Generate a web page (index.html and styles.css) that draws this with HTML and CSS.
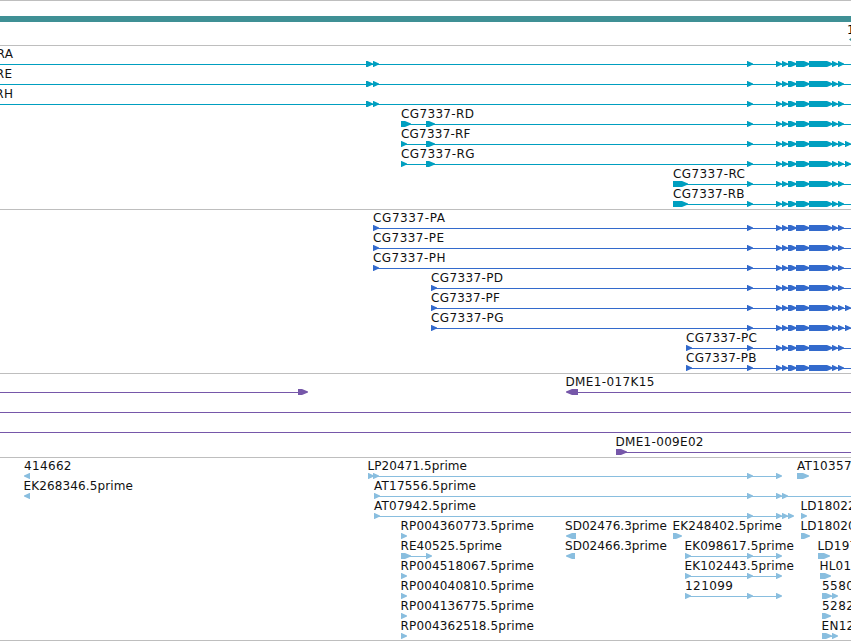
FILE: index.html
```html
<!DOCTYPE html>
<html lang="en">
<head>
<meta charset="utf-8">
<title>Genome browser</title>
<link rel="stylesheet" href="styles.css">
</head>
<body>
<main class="browser">
  <header class="ruler">
    <div class="ruler-bar"></div>
    <svg class="ruler-scale" width="851" height="23">
      <text class="scale-label" x="847" y="12">1</text>
      <path class="scale-arrow" d="M849 17.5L851 16V19Z"/>
    </svg>
  </header>
  <section class="track transcript" id="transcript"></section>
  <section class="track protein" id="protein"></section>
  <section class="track clone" id="clone"></section>
  <section class="track est" id="est"></section>
  <div class="end-rule"></div>
</main>
<script src="tracks.js"></script>
</body>
</html>
```
FILE: styles.css
```css
body {
  margin: 0;
  background: #fff;
  overflow: hidden;
}

.browser {
  display: flex;
  flex-direction: column;
  width: 851px;
  height: 641px;
  overflow: hidden;
}

.ruler {
  display: flex;
  flex-direction: column;
  box-sizing: border-box;
  flex: none;
  height: 45px;
  padding-top: 15px;
  border-top: 1px solid #bebebe;
}

.ruler-bar {
  height: 6px;
  background: #3f9095;
}

.ruler-scale {
  display: block;
}

.scale-label {
  font: 12px "DejaVu Sans", sans-serif;
}

.scale-arrow {
  fill: #3f9095;
}

.track {
  flex: none;
  padding: 1px 0 2px;
  border-top: 1px solid #bebebe;
}

.row {
  display: block;
  width: 851px;
  height: 20px;
  overflow: hidden;
}

.row text {
  font: 12px "DejaVu Sans", sans-serif;
  fill: #111;
}

.transcript { fill: #009fc0; }
.protein { fill: #336acc; }
.clone { fill: #7657a9; }
.est {
  fill: #89bedf;
  padding-bottom: 1px;
}

.end-rule {
  height: 1px;
  flex: none;
  background: #bebebe;
}
```
FILE: tracks.js
```
const NS = "http://www.w3.org/2000/svg";
const EDGE = 851;

// Exons shared by every CG7337 model.
const COMMON = [[747, 753], [776, 782], [782, 788], [788, 797], [796, 810], [809, 833], [832, 838], [838, 844]];
const LAST = [845, 851];

// A feature: label, label x, label width, line start, line end, exons, strand.
function feature(label, x, width, from, to, exons, strand = 1) {
  return { label, x, width, from, to, exons, strand };
}

function gene(label, x, width, from, exons, extra) {
  return feature(label, x, width, from, EDGE, [...exons, ...COMMON, ...(extra ? [LAST] : [])]);
}

const tracks = {
  transcript: [
    [gene("CG7337-RA", -59, 72, 0, [[366, 373], [373, 379]])],
    [gene("CG7337-RE", -60, 72, 0, [[366, 373], [373, 379]])],
    [gene("CG7337-RH", -60, 73, 0, [[366, 373], [373, 379]])],
    [gene("CG7337-RD", 401, 73, 401, [[401, 411], [426, 435]])],
    [gene("CG7337-RF", 401, 69.5, 401, [[401, 407], [426, 435]], true)],
    [gene("CG7337-RG", 401, 73.5, 401, [[401, 407], [426, 435]], true)],
    [gene("CG7337-RC", 673, 72, 673, [[673, 688]])],
    [gene("CG7337-RB", 673, 71.5, 673, [[673, 688]])]
  ],
  protein: [
    [gene("CG7337-PA", 373, 72, 373, [[373, 379]])],
    [gene("CG7337-PE", 373, 71, 373, [[373, 379]])],
    [gene("CG7337-PH", 373, 72.5, 373, [[373, 379]])],
    [gene("CG7337-PD", 431, 72, 431, [[431, 437]])],
    [gene("CG7337-PF", 431, 69, 431, [[431, 437]], true)],
    [gene("CG7337-PG", 431, 72.5, 431, [[431, 437]], true)],
    [gene("CG7337-PC", 686, 71, 686, [[686, 692]])],
    [gene("CG7337-PB", 686, 70.5, 686, [[686, 692]])]
  ],
  clone: [
    [feature("", 0, 0, 0, 303, [[298, 308]]),
     feature("DME1-017K15", 565.5, 89, 570, EDGE, [[566, 578]], -1)],
    [feature("", 0, 0, 0, EDGE, [])],
    [feature("", 0, 0, 0, EDGE, [])],
    [feature("DME1-009E02", 615.5, 88, 616, EDGE, [[616, 627]])]
  ],
  est: [
    [feature("414662", 24, 47.5, 25, 25, [[24, 30]], -1),
     feature("LP20471.5prime", 367.5, 99.5, 368, 777, [[368, 374], [373, 379], [747, 753], [776, 782]]),
     feature("AT10357.5prime", 797, 103, 797, 797, [[797, 809]])],
    [feature("EK268346.5prime", 23.5, 109.5, 25, 25, [[24, 30]], -1),
     feature("AT17556.5prime", 374, 102, 374, EDGE, [[374, 380], [747, 753], [776, 782], [782, 788]])],
    [feature("AT07942.5prime", 374, 102, 374, 789, [[374, 380], [747, 753], [776, 782], [782, 788], [788, 794]]),
     feature("LD18022.5prime", 800.5, 103, 801, 801, [[801, 807]])],
    [feature("RP004360773.5prime", 400.5, 133.5, 401, 401, [[401, 407]]),
     feature("SD02476.3prime", 565, 102, 567, 567, [[566, 576]], -1),
     feature("EK248402.5prime", 672.5, 109.5, 673, 673, [[673, 682]]),
     feature("LD18020.5prime", 800.5, 103, 801, 801, [[801, 810]])],
    [feature("RE40525.5prime", 400.5, 101.5, 401, 427, [[401, 411], [426, 432]]),
     feature("SD02466.3prime", 565, 102, 567, 567, [[566, 575]], -1),
     feature("EK098617.5prime", 684.5, 109.5, 685, 777, [[685, 691], [747, 753], [776, 782]]),
     feature("LD19735.5prime", 817.5, 103, 818, 818, [[818, 830]])],
    [feature("RP004518067.5prime", 400.5, 133.5, 401, 401, [[401, 407]]),
     feature("EK102443.5prime", 684.5, 109.5, 685, 777, [[685, 691], [747, 753], [776, 782]]),
     feature("HL01222.5prime", 819.5, 103, 820, 820, [[820, 831]])],
    [feature("RP004040810.5prime", 400.5, 133.5, 401, 401, [[401, 407]]),
     feature("121099", 685, 48, 685, 777, [[685, 691], [747, 753], [776, 782]]),
     feature("558012", 822, 48, 822, 833, [[822, 832], [832, 838]])],
    [feature("RP004136775.5prime", 400.5, 133.5, 401, 401, [[401, 407]]),
     feature("528212", 822, 48, 822, 822, [[822, 831]])],
    [feature("RP004362518.5prime", 400.5, 133.5, 401, 401, [[401, 407]]),
     feature("EN12345.5prime", 821.5, 105, 822, 833, [[822, 832], [832, 838]])]
  ]
};

function add(parent, name, attrs, text) {
  const el = document.createElementNS(NS, name);
  for (const key in attrs) el.setAttribute(key, attrs[key]);
  if (text) el.textContent = text;
  parent.appendChild(el);
}

// Block with a pointed end that faces along the strand.
function exonPath([a, b], strand) {
  const tip = b - a < 8 ? 5.5 : 6;
  return strand > 0
    ? `M${a} 14H${b - tip}L${b} 16.5V17.5L${b - tip} 20H${a}Z`
    : `M${b} 14H${a + tip}L${a} 16.5V17.5L${a + tip} 20H${b}Z`;
}

for (const [id, rows] of Object.entries(tracks)) {
  const section = document.getElementById(id);
  for (const row of rows) {
    const svg = document.createElementNS(NS, "svg");
    svg.setAttribute("class", "row");
    for (const f of row) {
      if (f.to > f.from) add(svg, "rect", { x: f.from, y: 17, width: f.to - f.from, height: 1 });
      for (const exon of f.exons) add(svg, "path", { d: exonPath(exon, f.strand) });
      if (f.label) add(svg, "text", { x: f.x, y: 11, textLength: f.width }, f.label);
    }
    section.appendChild(svg);
  }
}
```
